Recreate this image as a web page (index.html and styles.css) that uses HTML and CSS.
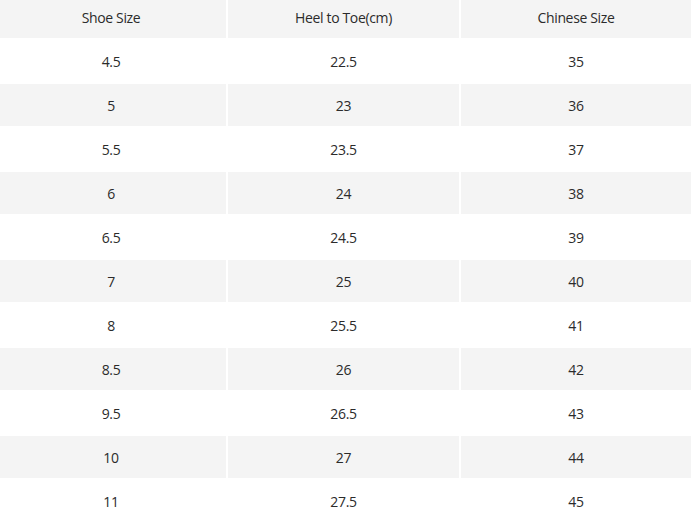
FILE: index.html
```html
<!DOCTYPE html>
<html>
<head>
<meta charset="utf-8">
<link rel="stylesheet" href="styles.css">
</head>
<body>
<div class="size-table">
  <div class="cell head first">Shoe Size</div><div class="cell head">Heel to Toe(cm)</div><div class="cell head">Chinese Size</div>
  <div class="cell first">4.5</div><div class="cell">22.5</div><div class="cell">35</div>
  <div class="cell alt first">5</div><div class="cell alt">23</div><div class="cell alt">36</div>
  <div class="cell first">5.5</div><div class="cell">23.5</div><div class="cell">37</div>
  <div class="cell alt first">6</div><div class="cell alt">24</div><div class="cell alt">38</div>
  <div class="cell first">6.5</div><div class="cell">24.5</div><div class="cell">39</div>
  <div class="cell alt first">7</div><div class="cell alt">25</div><div class="cell alt">40</div>
  <div class="cell first">8</div><div class="cell">25.5</div><div class="cell">41</div>
  <div class="cell alt first">8.5</div><div class="cell alt">26</div><div class="cell alt">42</div>
  <div class="cell first">9.5</div><div class="cell">26.5</div><div class="cell">43</div>
  <div class="cell alt first">10</div><div class="cell alt">27</div><div class="cell alt">44</div>
  <div class="cell first">11</div><div class="cell">27.5</div><div class="cell">45</div>
</div>
</body>
</html>
```
FILE: styles.css
```css
html, body {
  margin: 0;
  padding: 0;
  background: #fff;
  overflow: hidden;
}
.size-table {
  display: grid;
  grid-template-columns: 226px 231px 230px;
  grid-auto-rows: 42px;
  grid-template-rows: 38px;
  gap: 2px;
  font-family: "Open Sans", "Segoe UI", sans-serif;
  font-size: 14px;
  letter-spacing: -0.35px;
  color: #2b2b2b;
}
.cell {
  display: flex;
  align-items: center;
  justify-content: center;
  background: #fff;
  box-sizing: border-box;
}
.cell.first {
  padding-right: 4px;
}
.cell.head {
  background: #f4f4f4;
  padding-bottom: 3px;
}
.cell.alt {
  background: #f4f4f4;
}
```
